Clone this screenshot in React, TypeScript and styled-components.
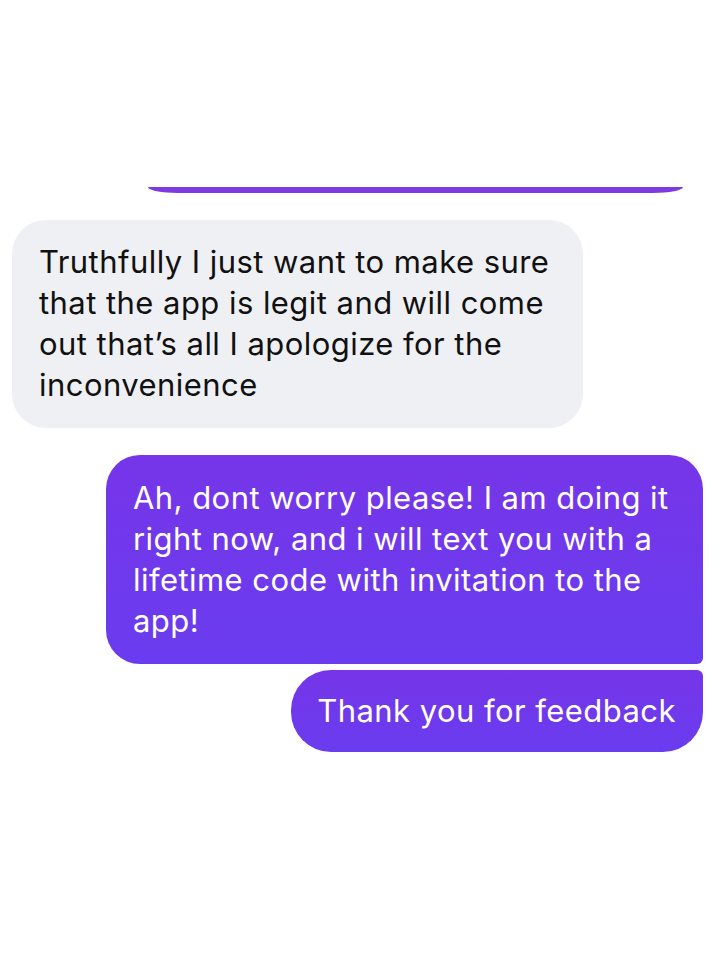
import React from 'react';
import styled, { createGlobalStyle } from 'styled-components';

const Global = createGlobalStyle`
  html, body {
    margin: 0;
    padding: 0;
    background: #ffffff;
  }
  body {
    font-family: Inter, "Noto Sans", "Liberation Sans", sans-serif;
    -webkit-font-smoothing: antialiased;
  }
`;

const Thread = styled.div`
  width: 720px;
  height: 960px;
  box-sizing: border-box;
  padding: 187px 17px 0 12px;
  display: flex;
  flex-direction: column;
  background: #fff;
`;

// bottom edge of an earlier message scrolled off the top
const CutBubble = styled.div`
  align-self: flex-end;
  width: 535px;
  height: 6px;
  margin-right: 20px;
  background: #7d3ae0;
  border-radius: 0 0 30px 30px / 0 0 6px 6px;
`;

const Row = styled.div<{ $out?: boolean; $gap: number }>`
  display: flex;
  justify-content: ${({ $out }) => ($out ? 'flex-end' : 'flex-start')};
  margin-top: ${({ $gap }) => $gap}px;
`;

const Bubble = styled.div<{ $out?: boolean; $tail?: 'top' | 'bottom'; $w?: number; $pad: string }>`
  box-sizing: border-box;
  width: ${({ $w }) => ($w ? `${$w}px` : 'auto')};
  padding: ${({ $pad }) => $pad};
  font-size: 31px;
  line-height: 41px;
  letter-spacing: 0.45px;
  white-space: ${({ $w }) => ($w ? 'normal' : 'nowrap')};
  color: ${({ $out }) => ($out ? '#ffffff' : '#111111')};
  background: ${({ $out }) =>
    $out ? 'linear-gradient(180deg, #7635e8 0%, #6a3cef 100%)' : '#eff0f4'};
  border-radius: ${({ $tail }) =>
    $tail === 'bottom' ? '34px 34px 6px 34px' : $tail === 'top' ? '40px 6px 40px 40px' : '34px'};
`;

export default function App() {
  return (
    <>
      <Global />
      <Thread>
        <CutBubble />
        <Row $gap={27}>
          <Bubble $w={571} $pad="21px 18px 23px 27px">
            Truthfully I just want to make sure that the app is legit and will come out that’s all I
            apologize for the inconvenience
          </Bubble>
        </Row>
        <Row $out $gap={27}>
          <Bubble $out $tail="bottom" $w={597} $pad="22px 18px 23px 27px">
            Ah, dont worry please! I am doing it right now, and i will text you with a lifetime code
            with invitation to the app!
          </Bubble>
        </Row>
        <Row $out $gap={6}>
          <Bubble $out $tail="top" $pad="20px 27px 21px 26px">
            Thank you for feedback
          </Bubble>
        </Row>
      </Thread>
    </>
  );
}
